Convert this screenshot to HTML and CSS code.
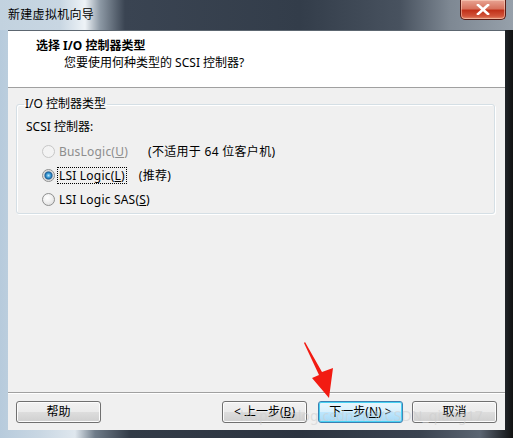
FILE: index.html
```html
<!DOCTYPE html>
<html lang="zh-CN">
<head>
<meta charset="utf-8">
<title>新建虚拟机向导</title>
<link rel="stylesheet" href="styles.css">
</head>
<body>
<div class="window">
  <div class="titlebar">
    <span class="title">新建虚拟机向导</span>
    <span class="close">
      <svg width="14" height="11" viewBox="0 0 14 11"><path d="M2 1 L12 10 M12 1 L2 10" stroke="#ffffff" stroke-width="2.6" stroke-linecap="square"/></svg>
    </span>
  </div>
  <div class="client">
    <div class="header">
      <div class="h-title">选择 I/O 控制器类型</div>
      <div class="h-sub">您要使用何种类型的 SCSI 控制器?</div>
    </div>
    <div class="body">
      <fieldset class="group">
        <legend>I/O 控制器类型</legend>
        <div class="sublabel">SCSI 控制器:</div>
        <div class="row disabled">
          <span class="radio"></span>
          <span class="lbl">BusLogic(<u>U</u>)</span>
          <span class="note">(不适用于 64 位客户机)</span>
        </div>
        <div class="row">
          <span class="radio checked"></span>
          <span class="lbl focus">LSI Logic(<u>L</u>)</span>
          <span class="note">(推荐)</span>
        </div>
        <div class="row">
          <span class="radio"></span>
          <span class="lbl wide">LSI Logic SAS(<u>S</u>)</span>
        </div>
      </fieldset>
    </div>
    <div class="footer">
      <button class="btn">帮助</button>
      <div class="spacer"></div>
      <button class="btn">&lt; 上一步(<u>B</u>)</button>
      <button class="btn default">下一步(<u>N</u>) &gt;</button>
      <button class="btn last">取消</button>
    </div>
  </div>
  <div class="watermark">https://blog.csdn.net/CSDN_qiang17</div>
  <svg class="arrow" width="513" height="438" viewBox="0 0 513 438">
    <polygon points="305,342 322,372 333,368 329,398 312,378 319,375 304,343" fill="#f21b12"/>
  </svg>
</div>
</body>
</html>
```
FILE: styles.css
```css
* { box-sizing: border-box; }
html, body { margin: 0; padding: 0; }
body {
  width: 513px;
  height: 438px;
  overflow: hidden;
  font-family: "Noto Sans", "Noto Sans CJK SC", sans-serif;
  font-size: 12px;
  color: #000;
}
.window {
  position: relative;
  width: 513px;
  height: 438px;
  display: flex;
  flex-direction: column;
  background: linear-gradient(90deg, #b7cbdc 0px, #c9d7e3 40px, #dfe7ee 75px, #6f7c89 95px, #323b47 130px, #2c3440 300px, #3a4350 420px, #5b6572 480px, #1e2226 506px, #111 513px);
}
.titlebar {
  height: 30px;
  display: flex;
  justify-content: space-between;
  align-items: flex-start;
  padding-left: 8px;
  padding-right: 8px;
  background: linear-gradient(90deg, #c2d2df 0px, #c8d6e2 60px, #eef3f7 85px, #8d99a5 100px, #3a4452 125px, #333d4a 300px, #48525f 400px, #7e8893 450px, #96a0aa 513px);
}
.title {
  margin-top: 7px;
  line-height: 16px;
  color: #000;
  letter-spacing: 0.3px;
}
.close {
  width: 46px;
  height: 20px;
  margin-right: -1px;
  display: flex;
  align-items: center;
  justify-content: center;
  border: 1px solid #5a1b14;
  border-top: none;
  border-radius: 0 0 5px 5px;
  background: linear-gradient(180deg, #e8a493 0%, #d7735e 45%, #c1321a 55%, #d2543a 85%, #e48d6e 100%);
  box-shadow: inset 0 0 0 1px rgba(255,220,200,0.5);
}
.client {
  flex: 1;
  margin: 0 8px 8px 8px;
  background: #f0f0f0;
  display: flex;
  flex-direction: column;
  border-top: 1px solid #5c6670;
}
.header {
  height: 57px;
  background: #fff;
  border-bottom: 1px solid #a0a0a0;
  padding: 7px 0 0 28px;
}
.h-title {
  font-weight: bold;
  line-height: 16px;
}
.h-sub {
  margin-top: 1px;
  padding-left: 28px;
  line-height: 16px;
}
.body {
  flex: 1;
  padding: 8px 10px 0 8px;
}
.group {
  margin: 0;
  padding: 7px 0 0 2px;
  height: 118px;
  border: 1px solid #d5dfe5;
  border-radius: 3px;
  box-shadow: inset 1px 1px 0 #fff, 1px 1px 0 #fff;
}
.group legend {
  padding: 0 1px;
  margin-left: 5px;
  line-height: 16px;
}
.sublabel {
  line-height: 16px;
  margin-left: 7px;
  margin-bottom: 4px;
}
.row {
  display: flex;
  align-items: center;
  height: 24px;
  padding-left: 23px;
  white-space: nowrap;
}
.radio {
  width: 13px;
  height: 13px;
  border-radius: 50%;
  border: 1px solid #8e8f8f;
  background: radial-gradient(circle at 40% 35%, #ffffff 0%, #f0f0f0 45%, #d6d6d6 100%);
  margin-right: 4px;
  flex: none;
}
.radio.checked {
  background: radial-gradient(circle at 50% 50%, #bfe6ff 0px, #3da0d8 2px, #1a5d98 3.5px, #d0d0d0 4.5px, #f6f6f6 6px);
}
.disabled .radio {
  border-color: #c6c6c6;
  background: #f3f3f3;
}
.lbl {
  width: 89px;
  line-height: 15px;
  flex: none;
  letter-spacing: 0.2px;
}
.lbl.wide { width: auto; }
.lbl.focus {
  width: auto;
  outline: 1px dotted #000;
  outline-offset: 0;
  padding: 0 1px;
  margin-right: 13px;
  margin-left: -1px;
}
.disabled .lbl { color: #8d8d8d; }
.note { line-height: 15px; letter-spacing: 0.3px; }
.footer {
  height: 38px;
  border-top: 1px solid #a0a0a0;
  box-shadow: inset 0 1px 0 #fff;
  display: flex;
  align-items: flex-start;
  padding: 8px 8px 0 8px;
}
.spacer { flex: 1; }
.btn {
  width: 85px;
  height: 22px;
  margin: 0 11px 0 0;
  padding: 0;
  font-family: "Noto Sans", "Noto Sans CJK SC", sans-serif;
  font-size: 12px;
  color: #000;
  border: 1px solid #707070;
  border-radius: 3px;
  background: linear-gradient(180deg, #f2f2f2 0%, #ebebeb 48%, #dddddd 52%, #cfcfcf 100%);
  box-shadow: inset 0 0 0 1px #fcfcfc;
  line-height: 18px;
}
.btn.default {
  border-color: #3c7fb1;
  background: linear-gradient(180deg, #eaf6fd 0%, #d9f0fc 48%, #bee6fd 52%, #a7d9f5 100%);
  box-shadow: inset 0 0 0 1px #48d2f3;
  margin-right: 9px;
}
.btn.last { margin-right: 0; }
.watermark {
  position: absolute;
  left: 240px;
  top: 407px;
  font-family: "Noto Sans", sans-serif;
  font-size: 14px;
  line-height: 18px;
  color: rgba(205, 205, 205, 0.55);
  letter-spacing: 0.1px;
  pointer-events: none;
}
.arrow {
  position: absolute;
  left: 0;
  top: 0;
  pointer-events: none;
}
```
